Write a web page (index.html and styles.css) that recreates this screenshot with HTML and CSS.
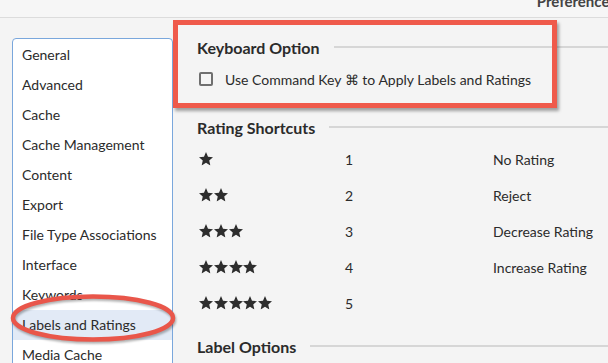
FILE: index.html
```html
<!DOCTYPE html>
<html>
<head>
    <meta charset="utf-8" />
    <link rel="stylesheet" href="styles.css">
</head>
<body>
    <svg width="0" height="0" class="defs">
        <symbol id="star" viewBox="1.2 1.5 21.6 20.5">
            <polygon points="12,1.5 15.1,8.6 22.8,9.3 17,14.4 18.7,22 12,18 5.3,22 7,14.4 1.2,9.3 8.9,8.6" />
        </symbol>
    </svg>

    <div class="title_bar">
        <div class="title">Preferences</div>
    </div>

    <div class="main">
        <ul class="side_list">
            <li>General</li>
            <li>Advanced</li>
            <li>Cache</li>
            <li>Cache Management</li>
            <li>Content</li>
            <li>Export</li>
            <li>File Type Associations</li>
            <li>Interface</li>
            <li>Keywords</li>
            <li class="selected">Labels and Ratings</li>
            <li>Media Cache</li>
        </ul>

        <div class="panel">
            <div class="section_head">
                <span>Keyboard Option</span>
                <div class="rule"></div>
            </div>
            <label class="check_row">
                <span class="check_box"></span>
                <span>Use Command Key &#8984; to Apply Labels and Ratings</span>
            </label>

            <div class="section_head rating_head">
                <span>Rating Shortcuts</span>
                <div class="rule"></div>
            </div>
            <div class="rating_rows">
                <div class="rating_row">
                    <div class="stars"><svg><use href="#star"/></svg></div>
                    <div class="key">1</div>
                    <div class="desc">No Rating</div>
                </div>
                <div class="rating_row">
                    <div class="stars"><svg><use href="#star"/></svg><svg><use href="#star"/></svg></div>
                    <div class="key">2</div>
                    <div class="desc">Reject</div>
                </div>
                <div class="rating_row">
                    <div class="stars"><svg><use href="#star"/></svg><svg><use href="#star"/></svg><svg><use href="#star"/></svg></div>
                    <div class="key">3</div>
                    <div class="desc">Decrease Rating</div>
                </div>
                <div class="rating_row">
                    <div class="stars"><svg><use href="#star"/></svg><svg><use href="#star"/></svg><svg><use href="#star"/></svg><svg><use href="#star"/></svg></div>
                    <div class="key">4</div>
                    <div class="desc">Increase Rating</div>
                </div>
                <div class="rating_row">
                    <div class="stars"><svg><use href="#star"/></svg><svg><use href="#star"/></svg><svg><use href="#star"/></svg><svg><use href="#star"/></svg><svg><use href="#star"/></svg></div>
                    <div class="key">5</div>
                    <div class="desc"></div>
                </div>
            </div>

            <div class="section_head label_head">
                <span>Label Options</span>
                <div class="rule"></div>
            </div>
        </div>
    </div>

    <!-- red call-outs drawn over the screenshot -->
    <div class="callout_box"></div>
    <svg class="callout_ring" width="174" height="56" viewBox="0 0 174 56">
        <ellipse cx="86" cy="26" rx="80" ry="21.5" />
    </svg>
</body>
</html>
```

FILE: styles.css
```css
*{
    padding: 0;
    margin: 0;
    box-sizing: border-box;
}
body{
    width: 608px;
    height: 363px;
    overflow: hidden;
    position: relative;
    background-color: #f4f4f4;
    color: #2b2b2b;
    font-family: Lato, "Open Sans", sans-serif;
    font-size: 14px;
}
.defs{
    position: absolute;
}

.title_bar{
    height: 18px;
    background-color: #f6f6f6;
    border-bottom: 1px solid #dcdcdc;
    display: flex;
    justify-content: flex-end;
}
.title{
    margin-top: -9px;
    margin-right: -8px;
    font-weight: bold;
    font-size: 15px;
    line-height: 20px;
    color: #444;
}

.main{
    display: flex;
    align-items: flex-start;
}

.side_list{
    list-style: none;
    margin: 20px 0 0 12px;
    width: 161px;
    height: 400px;
    padding-top: 1px;
    background-color: #fff;
    border: 1px solid #7aa7dc;
    border-radius: 4px;
}
.side_list li{
    height: 30px;
    line-height: 30px;
    padding-left: 9px;
    white-space: nowrap;
}
.side_list li.selected{
    background-color: #e2eaf6;
}

.panel{
    flex: 1;
    padding: 18px 0 0 24px;
}

.section_head{
    display: flex;
    align-items: center;
    gap: 14px;
    height: 22px;
    font-weight: bold;
    font-size: 16px;
}
.section_head .rule{
    flex: 1;
    height: 2px;
    background-color: #d6d6d6;
}

.check_row{
    display: flex;
    align-items: center;
    gap: 12px;
    height: 22px;
    margin-top: 10px;
    padding-left: 2px;
}
.check_box{
    width: 14px;
    height: 14px;
    border: 2px solid #6f6f6f;
    border-radius: 2px;
}

.rating_head{
    margin-top: 26px;
}
.rating_rows{
    margin-top: 3px;
}
.rating_row{
    display: flex;
    align-items: center;
    height: 36px;
}
.stars{
    width: 148px;
    padding-left: 2px;
    display: flex;
    gap: 0.8px;
}
.stars svg{
    width: 14px;
    height: 13.5px;
    fill: #2d2d2d;
}
.key{
    width: 148px;
}

.label_head{
    margin-top: 14px;
}

.callout_box{
    position: absolute;
    left: 173px;
    top: 20px;
    width: 384px;
    height: 88px;
    border: 5px solid #ef5a4b;
    box-shadow: 2px 3px 3px rgba(0, 0, 0, 0.35);
}
.callout_ring{
    position: absolute;
    left: 7px;
    top: 292px;
    fill: none;
    stroke: #e9564a;
    stroke-width: 4.5;
    filter: drop-shadow(1px 2px 1px rgba(0, 0, 0, 0.3));
}
```
